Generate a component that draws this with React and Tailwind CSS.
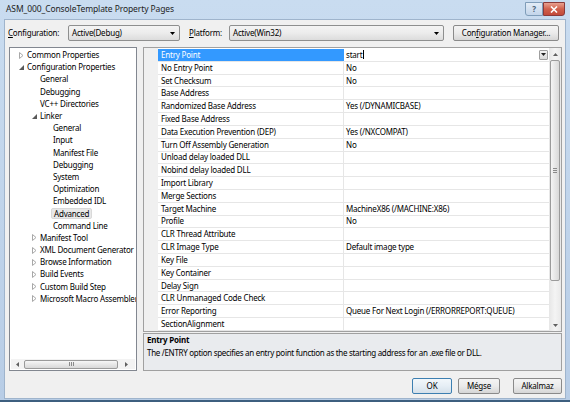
import React from 'react';

const treeItems = [
  { t: 'Common Properties', l: 0, a: 'c' },
  { t: 'Configuration Properties', l: 0, a: 'o' },
  { t: 'General', l: 1 },
  { t: 'Debugging', l: 1 },
  { t: 'VC++ Directories', l: 1 },
  { t: 'Linker', l: 1, a: 'o' },
  { t: 'General', l: 2 },
  { t: 'Input', l: 2 },
  { t: 'Manifest File', l: 2 },
  { t: 'Debugging', l: 2 },
  { t: 'System', l: 2 },
  { t: 'Optimization', l: 2 },
  { t: 'Embedded IDL', l: 2 },
  { t: 'Advanced', l: 2, sel: true },
  { t: 'Command Line', l: 2 },
  { t: 'Manifest Tool', l: 1, a: 'c' },
  { t: 'XML Document Generator', l: 1, a: 'c' },
  { t: 'Browse Information', l: 1, a: 'c' },
  { t: 'Build Events', l: 1, a: 'c' },
  { t: 'Custom Build Step', l: 1, a: 'c' },
  { t: 'Microsoft Macro Assembler', l: 1, a: 'c' },
];
const indent = ['pl-[9px]', 'pl-[22px]', 'pl-[35px]'];

const props = [
  ['Entry Point', 'start'],
  ['No Entry Point', 'No'],
  ['Set Checksum', 'No'],
  ['Base Address', ''],
  ['Randomized Base Address', 'Yes (/DYNAMICBASE)'],
  ['Fixed Base Address', ''],
  ['Data Execution Prevention (DEP)', 'Yes (/NXCOMPAT)'],
  ['Turn Off Assembly Generation', 'No'],
  ['Unload delay loaded DLL', ''],
  ['Nobind delay loaded DLL', ''],
  ['Import Library', ''],
  ['Merge Sections', ''],
  ['Target Machine', 'MachineX86 (/MACHINE:X86)'],
  ['Profile', 'No'],
  ['CLR Thread Attribute', ''],
  ['CLR Image Type', 'Default image type'],
  ['Key File', ''],
  ['Key Container', ''],
  ['Delay Sign', ''],
  ['CLR Unmanaged Code Check', ''],
  ['Error Reporting', 'Queue For Next Login (/ERRORREPORT:QUEUE)'],
  ['SectionAlignment', ''],
];

function Collapsed() {
  return (
    <svg width="5" height="7" viewBox="0 0 5 7">
      <path d="M0.5 0.5L4 3.5L0.5 6.5Z" fill="none" stroke="#a8a8a8" strokeWidth="1" />
    </svg>
  );
}
function Expanded() {
  return (
    <svg width="5" height="5" viewBox="0 0 5 5">
      <path d="M5 0V5H0Z" fill="#595959" />
    </svg>
  );
}
function DownTri({ c = '#000' }) {
  return (
    <svg width="5" height="3" viewBox="0 0 5 3">
      <path d="M0 0H5L2.5 3Z" fill={c} />
    </svg>
  );
}
function UpTri({ c = '#606060' }) {
  return (
    <svg width="5" height="3" viewBox="0 0 5 3">
      <path d="M0 3H5L2.5 0Z" fill={c} />
    </svg>
  );
}
function LeftTri() {
  return (
    <svg width="3" height="5" viewBox="0 0 3 5">
      <path d="M3 0V5L0 2.5Z" fill="#606060" />
    </svg>
  );
}
function RightTri() {
  return (
    <svg width="3" height="5" viewBox="0 0 3 5">
      <path d="M0 0V5L3 2.5Z" fill="#606060" />
    </svg>
  );
}

function Combo({ text, w }) {
  return (
    <div className={`${w} h-[16px] flex items-center justify-between pl-[3px] pr-[4px] border border-[#8e8f8f] rounded-[2px] bg-gradient-to-b from-[#f4f4f4] via-[#ececec] to-[#dcdcdc]`}>
      <span>{text}</span>
      <DownTri />
    </div>
  );
}

function Btn({ children, w, def }) {
  return (
    <div
      className={`${w} h-[16px] flex items-center justify-center rounded-[2px] border ${
        def ? 'border-[#3c7fb1] from-[#f2f7fb] via-[#e6eef5] to-[#d4e0ea]' : 'border-[#8a8a8a] from-[#f4f4f4] via-[#ebebeb] to-[#d6d6d6]'
      } bg-gradient-to-b`}
    >
      {children}
    </div>
  );
}

export default function App() {
  return (
    <div className="w-[570px] h-[402px] flex flex-col overflow-hidden bg-gradient-to-b from-[#c9dcf0] to-[#b8cde6] border-b-2 border-[#3d5f7f] font-['Noto_Sans',sans-serif] text-[8px] tracking-[-0.2px] text-black leading-none">
      {/* Title bar */}
      <div className="h-[19px] flex items-start shrink-0">
        <div className="pl-[6px] pt-[5px] text-[8.5px] tracking-[-0.1px] text-[#1e1e1e]">ASM_000_ConsoleTemplate Property Pages</div>
        <div className="ml-auto mr-[5px] flex">
          <div className="w-[18px] h-[14px] mt-[2px] border border-[#7f9db9] rounded-bl-[3px] bg-gradient-to-b from-[#e3ecf6] to-[#c3d5ea] flex items-center justify-center text-[8px] font-bold text-[#4a5f78]">?</div>
          <div className="w-[22px] h-[14px] mt-[2px] border border-[#8a3a3a] rounded-br-[3px] bg-gradient-to-b from-[#e8a090] via-[#d0604c] to-[#c24a3a] flex items-center justify-center">
            <svg width="8" height="7" viewBox="0 0 8 7">
              <path d="M1 0.5L7 6.5M7 0.5L1 6.5" stroke="#fff" strokeWidth="1.6" />
            </svg>
          </div>
        </div>
      </div>

      {/* Client */}
      <div className="h-[380px] mx-[4px] border border-[#9fb4cc] bg-[#f0f0f0] flex flex-col shrink-0">
        {/* Config row */}
        <div className="mt-[5px] h-[16px] flex items-center">
          <div className="w-[63px] pl-[3px]">
            <span className="underline">C</span>onfiguration:
          </div>
          <Combo text="Active(Debug)" w="w-[112px]" />
          <div className="w-[40px] ml-[9px]">
            <span className="underline">P</span>latform:
          </div>
          <Combo text="Active(Win32)" w="w-[215px]" />
          <div className="ml-[9px]">
            <Btn w="w-[106px]">
              <span>
                Con<span className="underline">f</span>iguration Manager...
              </span>
            </Btn>
          </div>
        </div>

        {/* Main area */}
        <div className="mt-[6px] h-[324px] flex">
          {/* Tree */}
          <div className="ml-[4px] w-[128px] h-full border border-[#828790] bg-white flex flex-col overflow-hidden">
            <div className="pt-[1px] flex flex-col">
              {treeItems.map((it, i) => (
                <div key={i} className={`h-[12.2px] flex items-center whitespace-nowrap ${indent[it.l]}`}>
                  <div className="w-[8px] shrink-0 flex items-center">
                    {it.a === 'c' && <Collapsed />}
                    {it.a === 'o' && <Expanded />}
                  </div>
                  {it.sel ? (
                    <span className="-ml-[2px] px-[2px] h-[11px] flex items-center bg-[#e8e8e8] border border-[#d9d9d9] rounded-[2px]">{it.t}</span>
                  ) : (
                    <span>{it.t}</span>
                  )}
                </div>
              ))}
            </div>
            <div className="mt-auto mb-[1px] mx-[1px] h-[10px] flex items-center bg-[#f3f3f3]">
              <div className="w-[12px] flex justify-center"><LeftTri /></div>
              <div className="w-[94px] h-[9px] ml-[1px] rounded-[2px] border border-[#9a9a9a] bg-gradient-to-b from-[#f6f6f6] to-[#d8d8d8] flex items-center justify-center gap-[1px]">
                <div className="w-[1px] h-[4px] bg-[#8a8a8a]" />
                <div className="w-[1px] h-[4px] bg-[#8a8a8a]" />
                <div className="w-[1px] h-[4px] bg-[#8a8a8a]" />
              </div>
              <div className="flex-1 flex justify-center"><RightTri /></div>
            </div>
          </div>

          {/* Right column */}
          <div className="ml-[6px] w-[419px] h-full flex flex-col">
            <div className="h-[285px] border border-[#a0a0a0] bg-white flex">
              <div className="w-[14px] bg-[#f0f0f0]" />
              <div className="w-[391px] flex flex-col pt-[1px]">
                {props.map(([n, v], i) => (
                  <div key={i} className="flex-1 flex">
                    {i === 0 ? (
                      <>
                        <div className="w-[186px] bg-[#3399ff] text-white flex items-center pl-[3px] border-b border-[#e6e6e6]">{n}</div>
                        <div className="flex-1 flex items-center pl-[2px] pr-[1px] border-b border-[#e6e6e6]">
                          <span>{v}</span>
                          <span className="ml-[1px] w-[1px] h-[9px] bg-black" />
                          <div className="ml-auto w-[9px] h-[10px] border border-[#9e9e9e] rounded-[1px] bg-gradient-to-b from-[#f5f5f5] to-[#d9d9d9] flex items-center justify-center">
                            <DownTri c="#222" />
                          </div>
                        </div>
                      </>
                    ) : (
                      <>
                        <div className="w-[186px] flex items-center pl-[3px] border-b border-r border-[#e6e6e6] whitespace-nowrap">{n}</div>
                        <div className="flex-1 flex items-center pl-[2px] border-b border-[#e6e6e6] whitespace-nowrap">{v}</div>
                      </>
                    )}
                  </div>
                ))}
              </div>
              {/* Vertical scrollbar */}
              <div className="w-[12px] flex flex-col bg-gradient-to-r from-[#e6e6e6] via-[#f4f4f4] to-[#e9e9e9]">
                <div className="h-[12px] flex items-center justify-center"><UpTri /></div>
                <div className="h-[221px] mx-[1px] rounded-[2px] border border-[#9b9b9b] bg-gradient-to-r from-[#f5f5f5] to-[#d9d9d9] flex flex-col items-center justify-center gap-[1px]">
                  <div className="w-[4px] h-[1px] bg-[#8a8a8a]" />
                  <div className="w-[4px] h-[1px] bg-[#8a8a8a]" />
                  <div className="w-[4px] h-[1px] bg-[#8a8a8a]" />
                </div>
                <div className="mt-auto h-[11px] flex items-center justify-center"><DownTri c="#606060" /></div>
              </div>
            </div>
            <div className="mt-[1px] flex-1 border border-[#a0a0a0] bg-[#e9ebee] px-[3px] pt-[2px] flex flex-col gap-[5px]">
              <div className="font-bold">Entry Point</div>
              <div className="tracking-[-0.3px]">The /ENTRY option specifies an entry point function as the starting address for an .exe file or DLL.</div>
            </div>
          </div>
        </div>

        {/* Buttons */}
        <div className="mt-[7px] h-[16px] flex">
          <div className="ml-auto flex">
            <Btn w="w-[40px]" def>OK</Btn>
            <div className="ml-[6px]"><Btn w="w-[42px]">Mégse</Btn></div>
            <div className="ml-[13px] mr-[3px]"><Btn w="w-[49px]">Alkalmaz</Btn></div>
          </div>
        </div>
      </div>
    </div>
  );
}
